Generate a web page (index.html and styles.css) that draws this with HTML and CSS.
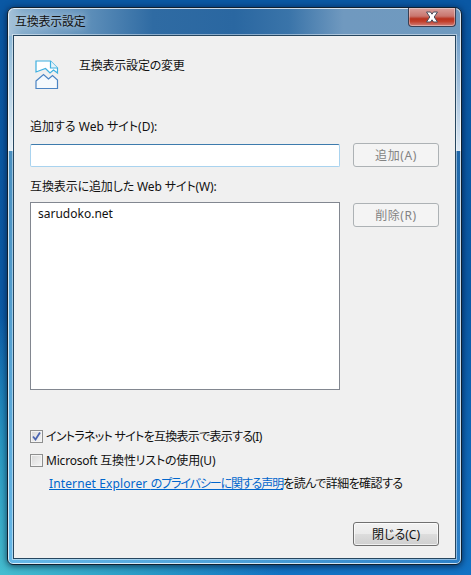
FILE: index.html
```html
<!DOCTYPE html>
<html lang="ja">
<head>
<meta charset="utf-8">
<title>互換表示設定</title>
<link rel="stylesheet" href="styles.css">
</head>
<body>
<div class="window">
  <div class="titlebar">
    <span class="title">互換表示設定</span>
    <div class="close-btn">
      <svg class="close-x" width="16" height="12" viewBox="0 0 16 12">
        <path d="M2.500 1h4L8 3.200 9.500 1h4L10.200 6l3.300 5h-4L8 8.800 6.500 11h-4L5.800 6z" fill="#fff" stroke="#4a4f5c" stroke-width="1"/>
      </svg>
    </div>
  </div>
  <div class="client">
    <div class="header">
      <svg class="doc-icon" width="24" height="30" viewBox="0 0 24 30">
        <path d="M1 12V1h14.500L22.500 8v5l-4-3-3.500 3-4.500-4.500L1 12z" fill="#fff" stroke="#3fb0e0" stroke-width="1.200"/>
        <path d="M15.500 1v7h7" fill="#e6f3fa" stroke="#3fb0e0" stroke-width="1.200"/>
        <path d="M1 21l7.500-6.500 5 4.500 4-3.500 5 4.500V28.500H1z" fill="#f4f9fd" stroke="#4a84c4" stroke-width="1.200"/>
      </svg>
      <h1 class="heading">互換表示設定の変更</h1>
    </div>

    <label class="field-label first-label">追加する Web サイト(D):</label>
    <div class="row add-row">
      <div class="textbox"></div>
      <div class="btn disabled">追加(A)</div>
    </div>

    <label class="field-label second-label">互換表示に追加した Web サイト(W):</label>
    <div class="row list-row">
      <div class="listbox">sarudoko.net</div>
      <div class="btn disabled remove-btn">削除(R)</div>
    </div>

    <div class="check-row check-first">
      <span class="checkbox">
        <svg width="9" height="9" viewBox="0 0 9 9"><path d="M1 4.500l2.500 3L8 .500" fill="none" stroke="#4a64b0" stroke-width="1.800"/></svg>
      </span>
      <span class="tight-check">イントラネット サイトを互換表示で表示する(I)</span>
    </div>
    <div class="check-row check-second">
      <span class="checkbox"></span>
      <span class="tight-compat">Microsoft 互換性リストの使用(U)</span>
    </div>
    <p class="privacy"><a class="link" href="#"><span class="latin">Internet Explorer </span><span class="tight-link">のプライバシーに関する声明</span></a><span class="tight-rest">を読んで詳細を確認する</span></p>

    <div class="footer">
      <div class="btn default">閉じる(C)</div>
    </div>
  </div>
</div>
</body>
</html>
```

FILE: styles.css
```css
* { box-sizing: border-box; }
html, body { margin: 0; height: 100%; }
body {
  width: 471px;
  height: 575px;
  overflow: hidden;
  padding: 7px 9px 10px 7px;
  font-family: "Noto Sans", "Noto Sans CJK JP", sans-serif;
  font-feature-settings: "palt";
  font-size: 12px;
  color: #111;
  background:
    radial-gradient(ellipse 60% 45% at 0 100%, #45bdd0 0%, rgba(50,170,200,.75) 50%, rgba(30,120,170,0) 100%),
    linear-gradient(180deg, #0a58a4 0%, #0b5aa6 50%, #1272c4 100%);
}
.window {
  width: 455px;
  height: 558px;
  display: flex;
  flex-direction: column;
  border: 1px solid #10202f;
  border-radius: 7px 7px 6px 6px;
  padding: 0 5px 5px;
  background:
    linear-gradient(90deg, #a9c4da 0, #86aecd 3%, #7aa3c7 8%, #6a98bf 14%, #2f6ba3 32%, #2a67a1 50%, #3a74a9 62%, #7099bf 74%, #6f9abf 100%) top/100% 28px no-repeat,
    linear-gradient(180deg, rgba(255,255,255,.25) 0, rgba(255,255,255,.85) 143px, rgba(255,255,255,0) 143px),
    linear-gradient(180deg, rgba(0,40,90,.28) 143px, rgba(0,40,90,0) 100%),
    linear-gradient(90deg, #66b8e8, #4da0d8 50%, #2c80c8);
  box-shadow: inset 0 0 0 1px rgba(255,255,255,.75), 0 1px 7px rgba(0,15,40,.75);
}
.titlebar {
  height: 27px;
  flex: none;
  position: relative;
  display: flex;
  align-items: center;
  padding: 0 0 1px 2px;
}
.title {
  font-size: 12px;
  letter-spacing: -.25px;
  color: #111;
  text-shadow: 0 0 7px rgba(255,255,255,.8);
}
.close-btn {
  position: absolute;
  top: 0;
  right: 0;
  width: 48px;
  height: 19px;
  border: 1px solid #3a3f52;
  border-top: none;
  border-radius: 0 0 4px 4px;
  display: flex;
  align-items: center;
  justify-content: center;
  background: linear-gradient(180deg, #d9a09c 0%, #c9766f 45%, #b8321f 60%, #c2402c 75%, #d0807a 100%);
  box-shadow: inset 0 0 0 1px rgba(255,255,255,.35);
}
.client {
  flex: 1;
  display: flex;
  flex-direction: column;
  background: #f0f0f0;
  border: 1px solid #26465f;
  box-shadow: 0 0 0 1px rgba(255,255,255,.45);
  padding: 0 16px;
  min-height: 0;
}
.header {
  display: flex;
  align-items: flex-start;
  height: 71px;
  padding: 24px 0 0 5px;
}
.doc-icon { flex: none; }
.heading {
  margin: -3px 0 0 20px;
  font-size: 12px;
  font-weight: 400;
  line-height: 18px;
  letter-spacing: -.22px;
  color: #111;
}
.field-label {
  display: block;
  line-height: 18px;
  height: 18px;
}
.first-label { margin-top: 11px; }
.second-label { margin-top: 11px; letter-spacing: -.12px; }
.row {
  display: flex;
  justify-content: space-between;
  align-items: flex-start;
  width: 409px;
}
.add-row { margin-top: 7px; }
.list-row { margin-top: 6px; }
.textbox {
  width: 310px;
  height: 23px;
  margin-top: 1px;
  background: #fff;
  border: 1px solid #a9d3ef;
  border-top-color: #3d7bad;
  border-radius: 2px;
}
.listbox {
  width: 310px;
  height: 188px;
  background: #fff;
  border: 1px solid #828790;
  padding: 2px 7px;
  font-size: 12px;
  line-height: 18px;
}
.btn {
  width: 86px;
  height: 24px;
  border-radius: 3px;
  display: flex;
  align-items: center;
  justify-content: center;
  font-size: 12px;
}
.btn.disabled {
  background: #f4f4f4;
  border: 1px solid #adb2b5;
  color: #838383;
  letter-spacing: .6px;
}
.remove-btn { margin-top: 1px; }
.btn.default {
  border: 1px solid #707070;
  color: #111;
  background: linear-gradient(180deg, #f2f2f2 0%, #ebebeb 48%, #dddddd 50%, #cfcfcf 100%);
  box-shadow: inset 0 0 0 1px rgba(255,255,255,.7);
}
.check-row {
  display: flex;
  align-items: center;
  gap: 3px;
  height: 18px;
}
.check-first { margin-top: 37px; }
.check-second { margin-top: 6px; }
.tight-check { letter-spacing: -.7px; }
.tight-compat { letter-spacing: -.2px; }
.checkbox {
  width: 13px;
  height: 13px;
  flex: none;
  border: 1px solid #8e8f8f;
  background: linear-gradient(135deg, #d8d8d8, #f6f6f6);
  box-shadow: inset 0 0 0 1px #f4f4f4;
  display: flex;
  align-items: center;
  justify-content: center;
}
.privacy {
  margin: 6px 0 0 19px;
  line-height: 18px;
  white-space: nowrap;
}
.link { color: #0066cc; text-decoration: underline; }
.latin { letter-spacing: .12px; }
.tight-link { letter-spacing: -1.1px; }
.tight-rest { letter-spacing: -.55px; }
.footer {
  margin-top: 29px;
  width: 409px;
  display: flex;
  justify-content: flex-end;
}
```
